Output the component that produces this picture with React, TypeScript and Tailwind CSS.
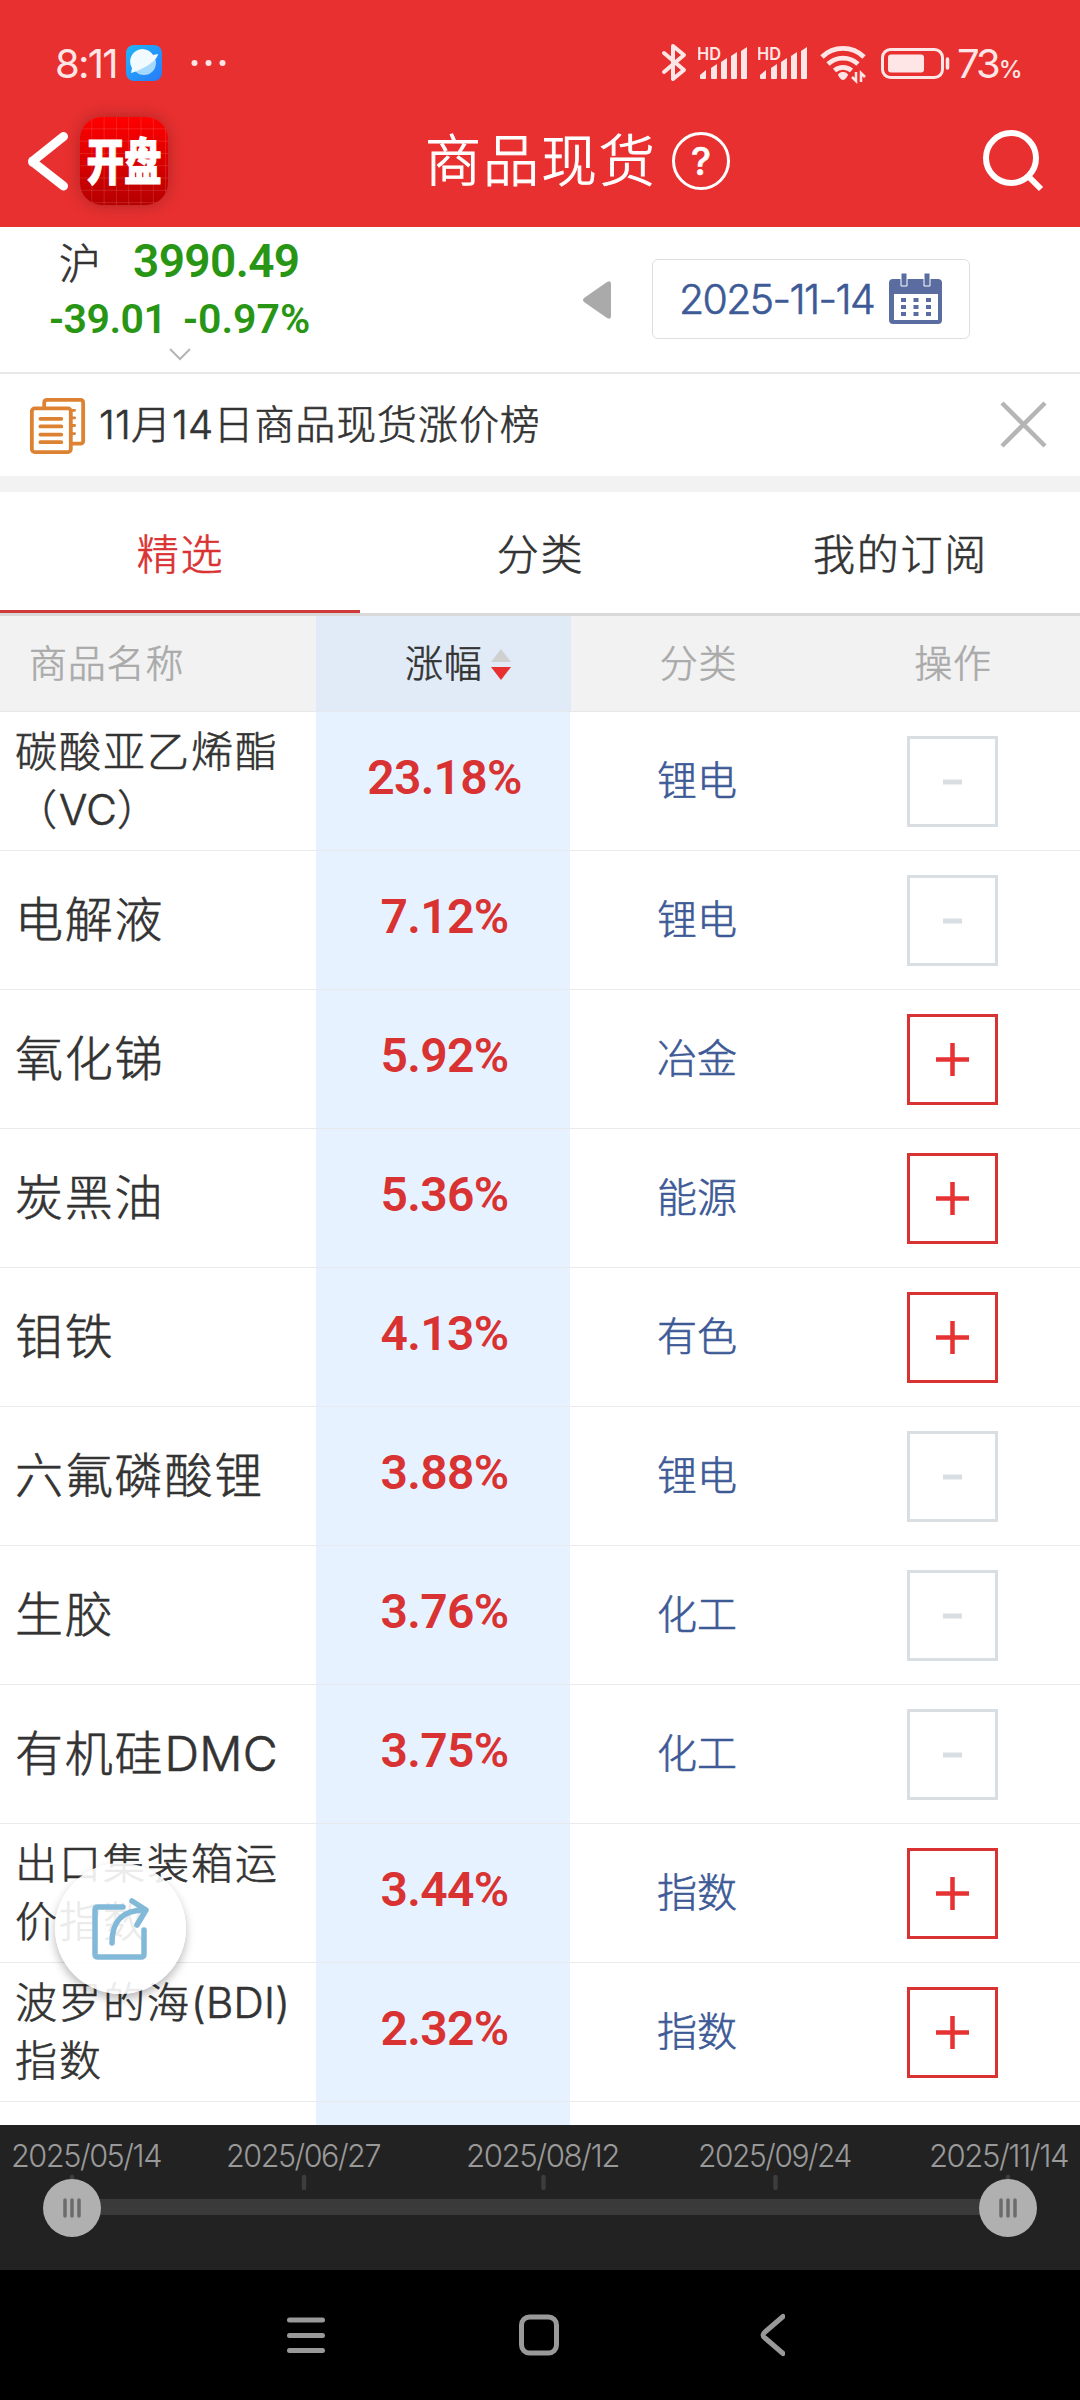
import type { ReactNode } from "react";

type Commodity = { name: string; change: string; category: string; added: boolean; wrap?: boolean };

const commodities: Commodity[] = [
  { name: "碳酸亚乙烯酯（VC）", change: "23.18%", category: "锂电", added: true, wrap: true },
  { name: "电解液", change: "7.12%", category: "锂电", added: true },
  { name: "氧化锑", change: "5.92%", category: "冶金", added: false },
  { name: "炭黑油", change: "5.36%", category: "能源", added: false },
  { name: "钼铁", change: "4.13%", category: "有色", added: false },
  { name: "六氟磷酸锂", change: "3.88%", category: "锂电", added: true },
  { name: "生胶", change: "3.76%", category: "化工", added: true },
  { name: "有机硅DMC", change: "3.75%", category: "化工", added: true },
  { name: "出口集装箱运价指数", change: "3.44%", category: "指数", added: false, wrap: true },
  { name: "波罗的海(BDI)指数", change: "2.32%", category: "指数", added: false, wrap: true },
];

const sansClass = "font-['Inter','Noto_Sans_CJK_SC',sans-serif] font-light [-webkit-text-stroke:0.6px_currentColor]";
const numberClass = "font-['Roboto',sans-serif] font-semibold [font-stretch:88%] [-webkit-text-stroke:0]";

// Latin runs sit tighter than the Chinese characters round them
function MixedText({ text }: { text: string }) {
  return text.split(/([A-Za-z0-9()]+)/).map((part, index) => index % 2 ? <span key={index} className="tracking-[0.300px]">{part}</span> : part);
}

function Signal() {
  return (
    <svg width="51" height="36" viewBox="0 0 51 36" fill="currentColor">
      <text x="-1" y="15.500" fontSize="17" fontWeight="600" fontFamily="Inter" textLength="24" lengthAdjust="spacingAndGlyphs">HD</text>
      <path d="M2 34v-3l6-5v8a1 1 0 0 1-1 1H3a1 1 0 0 1-1-1zM13 24l6-4v14a1 1 0 0 1-1 1h-4a1 1 0 0 1-1-1zM23 18l6-4v20a1 1 0 0 1-1 1h-4a1 1 0 0 1-1-1zM33 12l6-4v26a1 1 0 0 1-1 1h-4a1 1 0 0 1-1-1zM43 7l6-4v31a1 1 0 0 1-1 1h-4a1 1 0 0 1-1-1z" />
    </svg>
  );
}

function StatusBar() {
  return (
    <div className="flex h-[96px] items-start pt-[42px] pl-[55px] text-[#ffe6e6] [-webkit-text-stroke:0]">
      <span className="w-[71px] text-[40px] leading-[43px] font-normal tracking-[-1.800px]">8:11</span>
      <svg className="mt-[3px]" width="36" height="36" viewBox="0 0 36 36">
        <defs>
          <linearGradient id="browser" x1="0" y1="0" x2="1" y2="1"><stop stopColor="#1fb6fb" /><stop offset="1" stopColor="#2a79fa" /></linearGradient>
        </defs>
        <rect width="36" height="36" rx="8" fill="url(#browser)" />
        <circle cx="18" cy="18" r="12" fill="#a5d8fd" />
        <path d="M6 23A12 12 0 0 1 27 10l5-1c0 4-7 10-13 13-5 3-10 5-14 6z" fill="#f1fafe" />
      </svg>
      <svg className="ml-[29px]" width="36" height="43" fill="currentColor"><circle cx="3.500" cy="21" r="3" /><circle cx="17.500" cy="21" r="3" /><circle cx="31.500" cy="21" r="3" /></svg>
      <div className="ml-[434px] flex items-start">
        <svg width="26" height="40" viewBox="0 0 26 40" fill="none" stroke="currentColor" strokeWidth="4" strokeLinejoin="round" strokeLinecap="round"><path d="M3 11l20 17-11 9V4l11 9L3 30" /></svg>
        <div className="ml-[11px] flex gap-[9px] pt-[2px]"><Signal /><Signal /></div>
        <svg className="ml-[11px] mt-[2px]" width="48" height="40" viewBox="0 0 48 40" fill="none" stroke="currentColor" strokeWidth="4.800">
          <path d="M2 13a30 30 0 0 1 42 0M8 20a22 22 0 0 1 30 0M14.500 26.500a13 13 0 0 1 17 0" />
          <path d="M23 28c-2.500 0-5 1.500-5 3 1 2 3 5 5 5s4-3 5-5c0-1.500-2.500-3-5-3z" fill="currentColor" stroke="none" />
          <path d="M36 28v9l-4-4M41 38v-9l4 4" strokeWidth="2.500" />
        </svg>
        <svg className="ml-[13px] mt-[5px]" width="70" height="32" viewBox="0 0 70 32" fill="none"><rect x="1.500" y="2.500" width="60" height="28" rx="8" stroke="currentColor" strokeWidth="3" /><rect x="7" y="7.500" width="36" height="18" rx="3" fill="currentColor" /><path d="M66.500 12v9" stroke="currentColor" strokeWidth="3.500" strokeLinecap="round" /></svg>
        <span className="ml-[6px] text-[40px] leading-[43px] font-normal tracking-[-3px]">73<span className="ml-[1px] text-[24px] font-medium">%</span></span>
      </div>
    </div>
  );
}

function AppHeader() {
  return (
    <div className="flex h-[131px] items-start pt-[15px] pl-[28px]">
      <svg className="mt-[20px]" width="42" height="62" fill="none" stroke="white" strokeWidth="9" strokeLinecap="round" strokeLinejoin="round"><path d="M35.500 5.500L5.500 29.500a1 1 0 0 0 0 2L35.500 55" /></svg>
      <div className="ml-[10px] mt-[6px] flex size-[88px] items-center justify-center rounded-[22px] bg-[linear-gradient(to_right,transparent_11.500px,#ffffff30_12px,transparent_13px),linear-gradient(to_bottom,transparent_11.500px,#ffffff30_12px,transparent_13px),linear-gradient(#ff0000,#b50000)] bg-[size:12.300px_12.300px,12.300px_12.300px,auto] shadow-[0_0_16px_#00000040]">
        <span className="scale-x-[0.80] scale-y-[1.060] text-[47px] leading-none font-black whitespace-nowrap text-white [-webkit-text-stroke:1px_white]">开盘</span>
      </div>
      <h1 className="ml-[257px] mt-[10px] w-[247px] text-[56px] leading-[80px] tracking-[2px] text-white [-webkit-text-stroke:1px_white]">商品现货</h1>
      <div className="mt-[21px] flex size-[58px] items-center justify-center rounded-full border-[3px] border-white text-[38px] leading-none font-medium text-white">?</div>
      <svg className="ml-[251px] mt-[18px]" width="64" height="64" fill="none" stroke="white"><circle cx="30" cy="29" r="25" strokeWidth="6" /><path d="M47 47l13 13" strokeWidth="6" /></svg>
    </div>
  );
}

function MarketBar() {
  return (
    <div className="flex h-[147px] border-b-2 border-[#e9e9e9]">
      <div className="w-[320px] pl-[49px] text-[#289614]">
        <div className="flex h-[69px] items-center">
          <span className="w-[84px] pt-[4px] pl-[10px] text-[42px] text-[#333]">沪</span>
          <span className={`${numberClass} text-[46px] tracking-[-0.600px]`}>3990.49</span>
        </div>
        <div className={`${numberClass} flex h-[48px] items-center text-[41px] whitespace-nowrap`}><span className="w-[134px] tracking-[-0.500px]">-39.01</span><span>-0.97%</span></div>
        <svg className="ml-[120px] mt-[3px]" width="22" height="15" fill="none" stroke="#b5b5b5" strokeWidth="2"><path d="M1 2l10 10L21 2" /></svg>
      </div>
      <svg className="ml-[263px] mt-[54px]" width="28" height="38" fill="#aaa"><path d="M1 17L24 1q4-2 4 2v32q0 4-4 2L1 21q-2-2 0-4z" /></svg>
      <div className="ml-[41px] mt-[32px] flex h-[80px] w-[318px] items-center rounded-[6px] border border-[#dedede] pl-[26px] text-[#3d5a96]">
        <span className="w-[210px] pt-[2px] text-[41px] tracking-[-1.600px]">2025-11-14</span>
        <svg width="54" height="52" viewBox="0 0 54 52">
          <rect y="6" width="53" height="45" rx="4" fill="#5b6da0" />
          <path d="M5 21h44v26H5z" fill="#fff" />
          <path d="M12 0h6v13h-6zM35 0h6v13h-6z" fill="#5b6da0" stroke="#fff" />
          <path d="M12 25h5v4h-5zM24.500 25h5v4h-5zM37 25h5v4h-5zM12 32h5v4h-5zM24.500 32h5v4h-5zM37 32h5v4h-5zM12 39h5v4h-5zM24.500 39h5v4h-5zM37 39h5v4h-5z" fill="#5b6da0" />
        </svg>
      </div>
    </div>
  );
}

function Notice() {
  return (
    <div className="flex h-[102px] items-center pl-[29px] text-[#333]">
      <svg width="57" height="57" viewBox="0 0 60 60" fill="none" stroke="#dc8232" strokeWidth="4" strokeLinecap="round" strokeLinejoin="round">
        <path d="M16 11V6q0-3 3-3h35q3 0 3 3v40q0 3-3 3H44" />
        <rect x="3" y="12" width="41" height="46" rx="3" />
        <path d="M12 23h22M12 31h22M12 39.500h22M12 47.500h22" />
        <path d="M45 14h3M45 22h3M45 30h3M45 38.500h3" strokeWidth="3" />
      </svg>
      <span className="ml-[13px] w-[898px] text-[40px] tracking-[0.900px]"><MixedText text="11月14日商品现货涨价榜" /></span>
      <svg className="mb-[2px]" width="50" height="50" fill="none" stroke="#b5b5b5" strokeWidth="4.500"><path d="M5 4l43 43M48 4L5 47" /></svg>
    </div>
  );
}

function Tab({ active, children }: { active?: boolean; children: ReactNode }) {
  return (
    <div className={active ? "w-[360px] border-b-[3px] border-[#cf3a3a] text-[#d93232]" : "w-[360px] text-[#333]"}>
      <div className="pt-[30px] pl-[1px] text-center text-[42px] leading-[66px] tracking-[1.800px]">{children}</div>
    </div>
  );
}

function CommodityRow({ item }: { item: Commodity }) {
  return (
    <div className="flex h-[139px] shrink-0 items-center border-b border-[#e8eaec]">
      <div className={item.wrap ? "w-[316px] pb-[1px] pl-[15px] text-[42px] leading-[58px] tracking-[2px]" : "w-[316px] pb-[1px] pl-[15px] text-[48px] tracking-[1.800px]"}><MixedText text={item.name} /></div>
      <div className={`${numberClass} w-[254px] pb-[6px] pl-[3px] text-center text-[48px] tracking-[-0.700px] text-[#d93232]`}>{item.change}</div>
      <div className="w-[254px] text-center text-[40px] text-[#3d5a96]">{item.category}</div>
      <div className="flex w-[256px] justify-center pl-px">
        <button className={item.added ? "flex size-[91px] items-center justify-center border-[3px] border-[#d9dee3] text-[#d9dee3]" : "flex size-[91px] items-center justify-center border-[3px] border-[#d93232] text-[#e63232]"}>
          <svg width="33" height="33" fill="none" stroke="currentColor">{item.added ? <path d="M7 17h19" strokeWidth="5" /> : <path d="M0 16.500h33M16.500 0v33" strokeWidth="4.500" />}</svg>
        </button>
      </div>
    </div>
  );
}

function CommodityTable() {
  return (
    <div className="h-[1509px] overflow-hidden bg-[linear-gradient(to_right,#fff_316px,#e6f2ff_316px,#e6f2ff_570px,#fff_570px)]">
      <div className="flex h-[96px] items-center border-b border-[#e6e8ea] bg-[#f2f2f2] text-[38px] tracking-[0.800px] text-[#aaa]">
        <div className="w-[316px] pl-[29px]">商品名称</div>
        <div className="flex h-full w-[255px] items-center bg-[#e0ebf7] pl-[89px] text-[#333]">
          涨幅
          <svg className="ml-[7px]" width="22" height="34"><path d="M11 2l10 13H1z" fill="#d0d0d0" /><path d="M1 20h20L11 33z" fill="#e83030" /></svg>
        </div>
        <div className="w-[254px] pl-[1px] text-center">分类</div>
        <div className="w-[255px] pl-[1px] text-center">操作</div>
      </div>
      {commodities.map((item) => <CommodityRow key={item.name} item={item} />)}
    </div>
  );
}

function ShareButton() {
  return (
    <div className="absolute top-[1863px] left-[55px] flex size-[131px] items-center justify-center rounded-full bg-[#ffffffe6] shadow-[0_5px_10px_#00000045]">
      <svg width="60" height="64" viewBox="0 0 60 64" fill="none" stroke="#82b8d8" strokeWidth="5.500" strokeLinecap="round" strokeLinejoin="round">
        <path d="M32 10H7q-3 0-3 3v44q0 3 3 3h43q3 0 3-3V33" />
        <path d="M21 46C21 25 30 13 54 13M41 4l14 9-9 15" />
      </svg>
    </div>
  );
}

const dates = [
  { label: "2025/05/14", x: 11, tick: 72, width: 150 },
  { label: "2025/06/27", x: 226, tick: 304, width: 154 },
  { label: "2025/08/12", x: 466, tick: 543.5, width: 153 },
  { label: "2025/09/24", x: 698, tick: 775.5, width: 153 },
  { label: "2025/11/14", x: 929, tick: 1008, width: 139 },
];

function Timeline() {
  return (
    <svg className="block bg-[#222] [-webkit-text-stroke:0]" width="1080" height="145" fill="none">
      {dates.map((date) => (
        <g key={date.label}>
          <text x={date.x} y="42" fill="#999" fontSize="31.500" fontWeight="350" letterSpacing="-1.500" textLength={date.width} lengthAdjust="spacingAndGlyphs">{date.label}</text>
          <path d={`M${date.tick} 52v11`} stroke="#3d3d3d" strokeWidth="4.500" strokeLinecap="round" />
        </g>
      ))}
      <path d="M72 82h936" stroke="#3a3a3a" strokeWidth="16" />
      {[72, 1008].map((x) => (
        <g key={x}>
          <circle cx={x} cy="83" r="29" fill="#b0b0b0" />
          <path d={`M${x - 7} 75v16M${x} 75v16M${x + 7} 75v16`} stroke="#6c6c6c" strokeWidth="3.500" strokeLinecap="round" />
        </g>
      ))}
    </svg>
  );
}

export default function App() {
  return (
    <div className={`${sansClass} relative h-[2400px] w-[1080px] overflow-hidden bg-white text-[#333]`}>
      <div className="bg-[#e83030]"><StatusBar /><AppHeader /></div>
      <MarketBar />
      <Notice />
      <div className="h-[16px] bg-[#f2f2f2]" />
      <div className="flex h-[124px] border-b-[3px] border-[#d9d9d9]"><Tab active>精选</Tab><Tab>分类</Tab><Tab>我的订阅</Tab></div>
      <CommodityTable />
      <ShareButton />
      <Timeline />
      <div className="flex h-[130px] bg-black pt-[43px] pl-[285px]">
        <svg width="500" height="44" fill="none" stroke="#999" strokeWidth="5" strokeLinecap="round" strokeLinejoin="round">
          <path d="M4.500 7h33M4.500 22.500h33M4.500 37.500h33M498 3.500L480 19q-4 3 0 6l18 15.500" />
          <rect x="236.500" y="4" width="35" height="36" rx="8" />
        </svg>
      </div>
    </div>
  );
}
